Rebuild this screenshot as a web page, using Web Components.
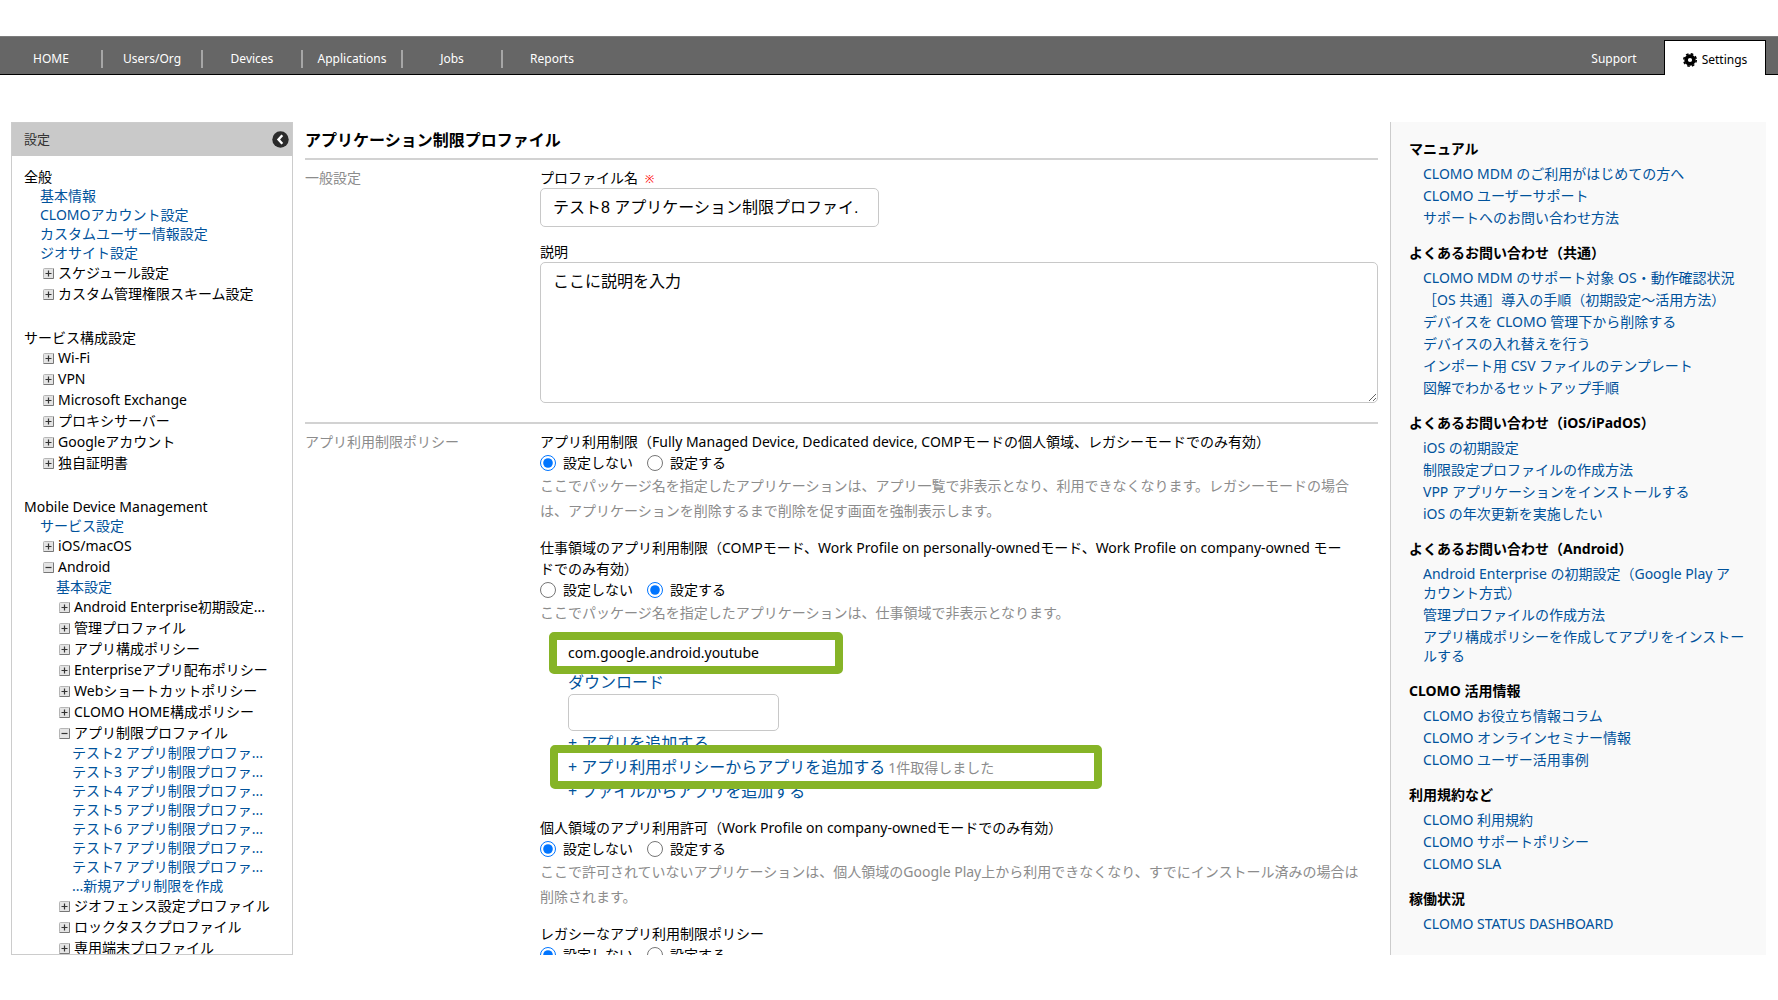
<!DOCTYPE html>
<html lang="ja">
<head>
<meta charset="utf-8">
<title>アプリケーション制限プロファイル</title>
<style>
  html, body {
    height: 100%;
    margin: 0;
  }

  body {
    --link: #00529b;
    --line: #ccc;
    --muted: #8c8c8c;
    --heading-font: "Noto Sans", "Noto Sans CJK JP", sans-serif;
    background: #fff;
    color: #000;
    font-family: "Noto Sans Medium", "Noto Sans", "Noto Sans CJK JP", sans-serif;
    font-size: 14px;
    line-height: 21px;
  }
</style>
</head>
<body>
<settings-page>
  <top-nav slot="nav"></top-nav>

  <side-panel slot="side" heading="設定">
    <tree-group heading="全般">
      <tree-link>基本情報</tree-link>
      <tree-link>CLOMOアカウント設定</tree-link>
      <tree-link>カスタムユーザー情報設定</tree-link>
      <tree-link>ジオサイト設定</tree-link>
      <tree-node label="スケジュール設定"></tree-node>
      <tree-node label="カスタム管理権限スキーム設定"></tree-node>
    </tree-group>
    <tree-group heading="サービス構成設定">
      <tree-node label="Wi-Fi"></tree-node>
      <tree-node label="VPN"></tree-node>
      <tree-node label="Microsoft Exchange"></tree-node>
      <tree-node label="プロキシサーバー"></tree-node>
      <tree-node label="Googleアカウント"></tree-node>
      <tree-node label="独自証明書"></tree-node>
    </tree-group>
    <tree-group heading="Mobile Device Management">
      <tree-link>サービス設定</tree-link>
      <tree-node label="iOS/macOS"></tree-node>
      <tree-node label="Android" open>
        <tree-link>基本設定</tree-link>
        <tree-node label="Android Enterprise初期設定..."></tree-node>
        <tree-node label="管理プロファイル"></tree-node>
        <tree-node label="アプリ構成ポリシー"></tree-node>
        <tree-node label="Enterpriseアプリ配布ポリシー"></tree-node>
        <tree-node label="Webショートカットポリシー"></tree-node>
        <tree-node label="CLOMO HOME構成ポリシー"></tree-node>
        <tree-node label="アプリ制限プロファイル" open>
          <tree-link>テスト2 アプリ制限プロファ...</tree-link>
          <tree-link>テスト3 アプリ制限プロファ...</tree-link>
          <tree-link>テスト4 アプリ制限プロファ...</tree-link>
          <tree-link>テスト5 アプリ制限プロファ...</tree-link>
          <tree-link>テスト6 アプリ制限プロファ...</tree-link>
          <tree-link>テスト7 アプリ制限プロファ...</tree-link>
          <tree-link>テスト7 アプリ制限プロファ...</tree-link>
          <tree-link>...新規アプリ制限を作成</tree-link>
        </tree-node>
        <tree-node label="ジオフェンス設定プロファイル"></tree-node>
        <tree-node label="ロックタスクプロファイル"></tree-node>
        <tree-node label="専用端末プロファイル"></tree-node>
      </tree-node>
    </tree-group>
  </side-panel>

  <profile-form slot="main" heading="アプリケーション制限プロファイル">
    <form-section label="一般設定">
      <text-field label="プロファイル名" value="テスト8 アプリケーション制限プロファイ." required></text-field>
      <text-field label="説明" value="ここに説明を入力" multiline></text-field>
    </form-section>
    <form-section label="アプリ利用制限ポリシー">
      <policy-option label="アプリ利用制限（Fully Managed Device, Dedicated device, COMPモードの個人領域、レガシーモードでのみ有効）" selected="off">
        <span slot="help">ここでパッケージ名を指定したアプリケーションは、アプリ一覧で非表示となり、利用できなくなります。レガシーモードの場合は、アプリケーションを削除するまで削除を促す画面を強制表示します。</span>
      </policy-option>
      <policy-option label="仕事領域のアプリ利用制限（COMPモード、Work Profile on personally-ownedモード、Work Profile on company-owned モードでのみ有効）" selected="on">
        <span slot="help">ここでパッケージ名を指定したアプリケーションは、仕事領域で非表示となります。</span>
        <package-list></package-list>
      </policy-option>
      <policy-option label="個人領域のアプリ利用許可（Work Profile on company-ownedモードでのみ有効）" selected="off">
        <span slot="help">ここで許可されていないアプリケーションは、個人領域のGoogle Play上から利用できなくなり、すでにインストール済みの場合は削除されます。</span>
      </policy-option>
      <policy-option label="レガシーなアプリ利用制限ポリシー" selected="off"></policy-option>
    </form-section>
  </profile-form>

  <help-panel slot="help"></help-panel>
</settings-page>

<script>
  function define(name, html, setup) {
    const template = document.createElement("template");
    template.innerHTML = html;
    customElements.define(name, class extends HTMLElement {
      constructor() {
        super();
        this.attachShadow({ mode: "open" });
      }

      connectedCallback() {
        if (this.shadowRoot.childNodes.length) return;
        this.shadowRoot.appendChild(template.content.cloneNode(true));
        if (setup) setup(this, this.shadowRoot);
      }
    });
  }

  define("settings-page", `
    <style>
      :host {
        display: flex;
        flex-direction: column;
        height: 100%;
        padding: 36px 0 45px;
        box-sizing: border-box;
      }
      .columns {
        flex: 1;
        min-height: 0;
        display: grid;
        grid-template-columns: 282px minmax(0, 1fr) 376px;
        grid-template-rows: minmax(0, 1fr);
        gap: 12px;
        padding: 0 12px 0 11px;
        margin-top: 47px;
      }
    </style>
    <slot name="nav"></slot>
    <div class="columns">
      <slot name="side"></slot>
      <slot name="main"></slot>
      <slot name="help"></slot>
    </div>
  `);

  define("top-nav", `
    <style>
      :host {
        display: block;
        background: #666;
        border-top: 1px solid #7c7c7c;
        box-shadow: inset 0 -1px #000;
        font-size: 12px;
      }
      nav {
        display: flex;
        box-sizing: border-box;
        height: 38px;
        align-items: center;
        padding: 6px 12px 0 1px;
      }
      a {
        box-sizing: border-box;
        width: 100px;
        color: #fff;
        line-height: 18px;
        text-align: center;
        text-decoration: none;
      }
      .item + .item {
        border-left: 2px solid #a6a6a6;
      }
      .spacer {
        flex: 1;
      }
      .tab {
        display: flex;
        align-items: center;
        justify-content: center;
        gap: 5px;
        width: 102px;
        height: 35px;
        padding-top: 4px;
        align-self: flex-end;
        background: #fff;
        border: 1px solid #000;
        border-bottom: 0;
        color: #000;
      }
    </style>
    <nav>
      <a class="item" href="#">HOME</a>
      <a class="item" href="#">Users/Org</a>
      <a class="item" href="#">Devices</a>
      <a class="item" href="#">Applications</a>
      <a class="item" href="#">Jobs</a>
      <a class="item" href="#">Reports</a>
      <div class="spacer"></div>
      <a href="#">Support</a>
      <a class="tab" href="#">
        <svg width="14" height="14" viewBox="0 0 14 14" aria-hidden="true">
          <circle cx="7" cy="7" r="3.9" fill="none" stroke="#000" stroke-width="3.6"/>
          <circle cx="7" cy="7" r="6.2" fill="none" stroke="#000" stroke-width="1.6" stroke-dasharray="2.6 2.27"/>
        </svg>
        Settings
      </a>
    </nav>
  `);

  define("side-panel", `
    <style>
      :host {
        display: flex;
        flex-direction: column;
        box-sizing: border-box;
        border: 1px solid var(--line);
        overflow: hidden;
      }
      header {
        display: flex;
        align-items: center;
        justify-content: space-between;
        height: 33px;
        flex: none;
        padding: 0 3px 0 12px;
        background: #c9c9c9;
        color: #333;
        font-size: 13px;
      }
      button {
        display: flex;
        padding: 0;
        border: 0;
        background: none;
      }
      .body {
        padding: 11px 0 0 12px;
        white-space: nowrap;
      }
    </style>
    <header>
      <span></span>
      <button type="button" aria-label="閉じる">
        <svg width="17" height="17" viewBox="0 0 17 17">
          <circle cx="8.500" cy="8.500" r="8.200" fill="#2b2b2b"/>
          <path d="M10.300 4.300 6.500 8.500l3.800 4.200" fill="none" stroke="#fff" stroke-width="2.400"/>
        </svg>
      </button>
    </header>
    <div class="body"><slot></slot></div>
  `, (host, root) => {
    root.querySelector("span").textContent = host.getAttribute("heading");
  });

  define("tree-group", `
    <style>
      :host {
        display: block;
        margin-bottom: 24px;
      }
      .heading {
        line-height: 19px;
      }
      .items {
        padding-left: 16px;
      }
    </style>
    <div class="heading"></div>
    <div class="items"><slot></slot></div>
  `, (host, root) => {
    root.querySelector(".heading").textContent = host.getAttribute("heading");
  });

  define("tree-link", `
    <style>
      :host {
        display: block;
        line-height: 19px;
      }
      a {
        color: var(--link);
        text-decoration: none;
      }
    </style>
    <a href="#"><slot></slot></a>
  `);

  define("tree-node", `
    <style>
      :host {
        display: block;
      }
      button {
        display: flex;
        align-items: center;
        gap: 4px;
        height: 21px;
        padding: 0 0 0 3px;
        border: 0;
        background: none;
        color: inherit;
        font: inherit;
        white-space: nowrap;
      }
      svg {
        margin-top: 2px;
      }
      .children {
        padding-left: 16px;
      }
    </style>
    <button type="button">
      <svg width="11" height="11" viewBox="0 0 11 11" aria-hidden="true">
        <rect x="0.500" y="0.500" width="10" height="10" rx="1" fill="#e4e4e4" stroke="#b5b5b5"/>
        <path d="M0.500 10.500h10v-10" fill="none" stroke="#777"/>
        <path class="sign" fill="none" stroke="#333" stroke-width="1.200"/>
      </svg>
      <span></span>
    </button>
    <div class="children"><slot></slot></div>
  `, (host, root) => {
    const button = root.querySelector("button");
    const children = root.querySelector(".children");
    const update = () => {
      const open = host.hasAttribute("open");
      button.setAttribute("aria-expanded", open);
      children.hidden = !open;
      root.querySelector(".sign").setAttribute("d", open ? "M2.500 5.500h6" : "M2.500 5.500h6M5.500 2.500v6");
    };
    root.querySelector("span").textContent = host.getAttribute("label");
    button.addEventListener("click", () => {
      host.toggleAttribute("open");
      update();
    });
    update();
  });

  define("profile-form", `
    <style>
      :host {
        display: block;
        overflow: hidden;
      }
      h1 {
        margin: 0;
        font-family: var(--heading-font);
        font-size: 16px;
        line-height: 36px;
      }
    </style>
    <h1></h1>
    <slot></slot>
  `, (host, root) => {
    root.querySelector("h1").textContent = host.getAttribute("heading");
  });

  define("form-section", `
    <style>
      :host {
        display: grid;
        grid-template-columns: 235px minmax(0, 1fr);
        border-top: 2px solid #d2d2d2;
        padding: 7px 0 19px;
      }
      .label {
        color: var(--muted);
      }
      .fields {
        display: flex;
        flex-direction: column;
        gap: 14px;
      }
    </style>
    <div class="label"></div>
    <div class="fields"><slot></slot></div>
  `, (host, root) => {
    root.querySelector(".label").textContent = host.getAttribute("label");
  });

  define("text-field", `
    <style>
      :host {
        display: block;
      }
      label {
        display: block;
      }
      .mark {
        margin-left: 7px;
        color: #f00;
        font-size: 11px;
        line-height: 1;
      }
      input, textarea {
        display: block;
        box-sizing: border-box;
        border: 1px solid #c8c8c8;
        border-radius: 5px;
        font-family: "Liberation Sans", "Noto Sans CJK JP", sans-serif;
        font-size: 16px;
        color: #000;
      }
      input {
        width: 339px;
        height: 39px;
        padding: 0 12px 4px;
      }
      textarea {
        width: 100%;
        height: 141px;
        padding: 7px 12px;
        line-height: 24px;
      }
    </style>
    <label for="field"></label>
  `, (host, root) => {
    const label = root.querySelector("label");
    const field = document.createElement(host.hasAttribute("multiline") ? "textarea" : "input");
    field.id = "field";
    field.value = host.getAttribute("value");
    label.textContent = host.getAttribute("label");
    if (host.hasAttribute("required")) {
      const mark = document.createElement("span");
      mark.className = "mark";
      mark.textContent = "※";
      label.appendChild(mark);
      field.required = true;
    }
    root.appendChild(field);
  });

  define("policy-option", `
    <style>
      :host {
        display: block;
      }
      fieldset {
        margin: 0;
        padding: 0;
        border: 0;
        min-width: 0;
      }
      legend {
        padding: 0 24px 0 0;
      }
      .choices {
        display: flex;
        gap: 14px;
      }
      label {
        display: flex;
        align-items: center;
        gap: 7px;
      }
      input {
        width: 16px;
        height: 16px;
        margin: 0;
        accent-color: #0075ff;
      }
      .help {
        padding-right: 16px;
        color: var(--muted);
        line-height: 25px;
      }
    </style>
    <fieldset>
      <legend></legend>
      <div class="choices">
        <label><input type="radio" name="use" value="off">設定しない</label>
        <label><input type="radio" name="use" value="on">設定する</label>
      </div>
    </fieldset>
    <div class="help"><slot name="help"></slot></div>
    <slot></slot>
  `, (host, root) => {
    root.querySelector("legend").textContent = host.getAttribute("label");
    root.querySelector(`input[value=${host.getAttribute("selected")}]`).checked = true;
  });

  // green frame laid over a row and the edges of its neighbours
  define("marked-row", `
    <style>
      :host {
        display: block;
        position: relative;
        width: 256px;
      }
      :host([wide]) {
        width: 516px;
      }
      :host::after {
        content: "";
        position: absolute;
        inset: -9px -19px;
        border: 8px solid #86b427;
        border-radius: 5px;
        pointer-events: none;
      }
      :host([wide])::after {
        inset: -10px -18px;
      }
    </style>
    <slot></slot>
  `);

  define("package-list", `
    <style>
      :host {
        display: block;
        padding: 16px 0 0 28px;
        font-size: 16px;
        line-height: 24px;
      }
      .name {
        margin-bottom: 5px;
        font-size: 14px;
      }
      a {
        color: var(--link);
        text-decoration: none;
      }
      input {
        display: block;
        box-sizing: border-box;
        width: 211px;
        height: 37px;
        border: 1px solid #c8c8c8;
        border-radius: 5px;
        padding: 0 12px;
        font: inherit;
      }
      .status {
        margin-left: 3px;
        color: var(--muted);
        font-size: 14px;
        line-height: 1;
      }
    </style>
    <marked-row class="name">com.google.android.youtube</marked-row>
    <div><a href="#">ダウンロード</a></div>
    <input type="text" aria-label="パッケージ名">
    <div><a href="#">+ アプリを追加する</a></div>
    <marked-row wide><a href="#">+ アプリ利用ポリシーからアプリを追加する</a><span class="status">1件取得しました</span></marked-row>
    <div><a href="#">+ ファイルからアプリを追加する</a></div>
  `);

  const helpLinks = [
    ["マニュアル", [
      "CLOMO MDM のご利用がはじめての方へ",
      "CLOMO ユーザーサポート",
      "サポートへのお問い合わせ方法"
    ]],
    ["よくあるお問い合わせ（共通）", [
      "CLOMO MDM のサポート対象 OS・動作確認状況",
      "［OS 共通］導入の手順（初期設定〜活用方法）",
      "デバイスを CLOMO 管理下から削除する",
      "デバイスの入れ替えを行う",
      "インポート用 CSV ファイルのテンプレート",
      "図解でわかるセットアップ手順"
    ]],
    ["よくあるお問い合わせ（iOS/iPadOS）", [
      "iOS の初期設定",
      "制限設定プロファイルの作成方法",
      "VPP アプリケーションをインストールする",
      "iOS の年次更新を実施したい"
    ]],
    ["よくあるお問い合わせ（Android）", [
      "Android Enterprise の初期設定（Google Play ア<br>カウント方式）",
      "管理プロファイルの作成方法",
      "アプリ構成ポリシーを作成してアプリをインストールする"
    ]],
    ["CLOMO 活用情報", [
      "CLOMO お役立ち情報コラム",
      "CLOMO オンラインセミナー情報",
      "CLOMO ユーザー活用事例"
    ]],
    ["利用規約など", [
      "CLOMO 利用規約",
      "CLOMO サポートポリシー",
      "CLOMO SLA"
    ]],
    ["稼働状況", ["CLOMO STATUS DASHBOARD"]]
  ];

  define("help-panel", `
    <style>
      :host {
        display: block;
        box-sizing: border-box;
        border-left: 1px solid var(--line);
        background: #f9f9f9;
        padding: 17px 18px 0;
        overflow: hidden;
        line-height: 19px;
      }
      h2 {
        margin: 0 0 6px;
        font-family: var(--heading-font);
        font-size: 14px;
      }
      ul {
        display: flex;
        flex-direction: column;
        gap: 3px;
        margin: 0 0 16px;
        padding: 0 0 0 14px;
        list-style: none;
      }
      a {
        color: var(--link);
        text-decoration: none;
      }
    </style>
  `, (host, root) => {
    const div = document.createElement("div");
    div.innerHTML = helpLinks.map(([title, links]) => `
      <h2>${title}</h2>
      <ul>${links.map((link) => `<li><a href="#">${link}</a></li>`).join("")}</ul>
    `).join("");
    root.appendChild(div);
  });
</script>
</body>
</html>
